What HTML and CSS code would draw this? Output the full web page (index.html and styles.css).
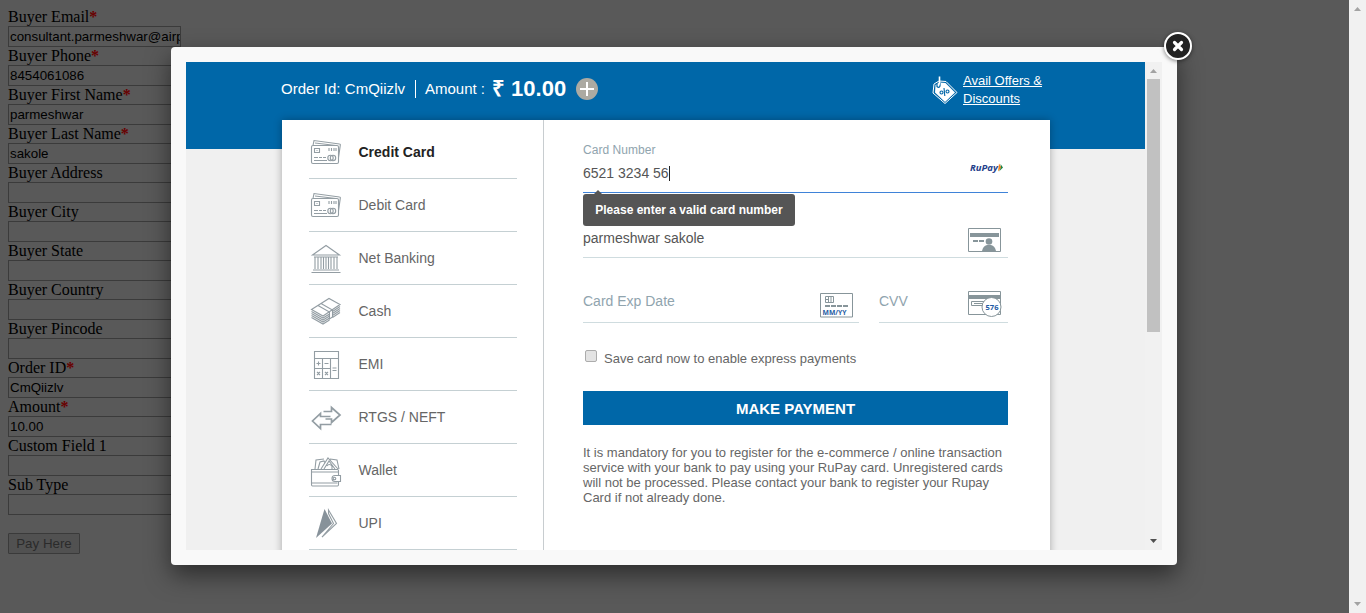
FILE: index.html
```html
<!DOCTYPE html>
<html lang="en">
<head>
<meta charset="utf-8">
<title>Payment</title>
<link rel="stylesheet" href="styles.css">
</head>
<body>
<div class="viewport">
  <form class="buyer">
    <label>Buyer Email<b>*</b></label><div class="field">consultant.parmeshwar@airp</div>
    <label>Buyer Phone<b>*</b></label><div class="field">8454061086</div>
    <label>Buyer First Name<b>*</b></label><div class="field">parmeshwar</div>
    <label>Buyer Last Name<b>*</b></label><div class="field">sakole</div>
    <label>Buyer Address</label><div class="field"></div>
    <label>Buyer City</label><div class="field"></div>
    <label>Buyer State</label><div class="field"></div>
    <label>Buyer Country</label><div class="field"></div>
    <label>Buyer Pincode</label><div class="field"></div>
    <label>Order ID<b>*</b></label><div class="field">CmQiizlv</div>
    <label>Amount<b>*</b></label><div class="field">10.00</div>
    <label>Custom Field 1</label><div class="field"></div>
    <label>Sub Type</label><div class="field"></div>
    <button type="button" class="pay-here">Pay Here</button>
  </form>
  <div class="page-scroll">
    <svg width="17" height="17"><path d="M5 11h7L8.500 7z" fill="#a3a3a3"/></svg>
    <svg width="17" height="17"><path d="M5 6h7L8.500 10z" fill="#a3a3a3"/></svg>
  </div>
</div>

<div class="modal">
  <div class="frame">
    <div class="content">
      <header class="top">
        <div class="order">
          <span class="order-id">Order Id: CmQiizlv</span>
          <span class="amount-label">Amount :</span>
          <strong class="amount">₹ 10.00</strong>
          <svg class="plus" width="22" height="22"><circle cx="11" cy="11" r="11" fill="#acaaa2"/><path d="M11 4v14M4 11h14" stroke="#fff" stroke-width="2"/></svg>
        </div>
        <a class="offers">
          <svg width="26" height="28" viewBox="0 0 26 28" fill="none">
            <path d="M2 8l5-3 7 .500 11 11-12 11L1 17z" stroke="#fff" stroke-width="1"/>
            <path d="M3.500 9l4-2.500 6 .5 9.500 9.500-10 9.500L3 16.500z" fill="#fff"/>
            <path d="M5 8v2.500q2 2 3-.5V7" stroke="#0067a8" stroke-width="1.200"/>
            <path d="M6.500 9q1-.5 1-3V.500" stroke="#fff" stroke-width="1.600"/>
            <g stroke="#0067a8" stroke-width="1.100"><circle cx="9.500" cy="16.500" r="1.500"/><circle cx="15.500" cy="15.500" r="1.500"/><path d="M12 12l.800 8"/></g>
          </svg>
          <span>Avail Offers &amp;<br>Discounts</span>
        </a>
      </header>
      <main class="card">
        <nav class="methods">
          <div class="method active"><svg class="icon" viewBox="0 0 32 32"><use href="#cards"/></svg>Credit Card</div>
          <div class="method"><svg class="icon" viewBox="0 0 32 32"><use href="#cards"/></svg>Debit Card</div>
          <div class="method"><svg class="icon low" viewBox="0 0 32 32"><path d="M2.500 12L16 2.500 29.500 12zM4 14h24M5 14v12M8 14v12M11 14v12M13.500 14v12M16 14v12M18.500 14v12M21 14v12M24 14v12M27 14v12M3 27h26M1.500 29.500h29"/></svg>Net Banking</div>
          <div class="method"><svg class="icon low" viewBox="0 0 32 32"><path d="M1.500 13.500L19 2.500l11 6L13 20zM8 9.500l11.500 6.500v7l3-2v-7L11 7.500M1.500 15.500L13 22l6.500-4M1.500 17.500L13 24l6.500-4M1.500 19.500L13 26l6.500-4M1.500 21.500L13 28l6.500-4M30 10.500l-7.500 5M30 12.500l-7.500 5M30 14.500l-7.500 5M30 16.500l-7.500 5"/></svg>Cash</div>
          <div class="method"><svg class="icon low" viewBox="0 0 32 32"><path d="M4.500 2.500h24v27h-24zM4.500 9.500h24M12.500 9.500v20M20.500 9.500v20M4.500 19.500h16M6.500 14.500h4M8.500 12.500v4M14.500 14.500h4M22.500 19h4M22.500 21.500h4M7 23l3 3M10 23l-3 3M15 23l3 3M18 23l-3 3"/></svg>EMI</div>
          <div class="method"><svg class="icon lower" viewBox="0 0 32 32"><path stroke-width="1.700" d="M13.500 8.500h8V4.500l8.500 7.500-8.500 7.500V16h-6M20.500 13.500h-10v-3L2.500 18l8 7.500v-4h11"/></svg>RTGS / NEFT</div>
          <div class="method"><svg class="icon lower" viewBox="0 0 32 32"><path d="M5 13L6 4l8-1M8 13l2-7 4-1 1 2M11 13l7-11 10 11M14 13l5-8 6 8M17 10q2-3 5 0v3M20 3l7 1 2 9M1.500 13.500h26q1 0 1 1v14q0 1.500-1 1.500h-25q-1 0-1-1.500zM2 16h26M1.500 27h26"/><path fill="#fff" d="M30.500 19.500v6H25q-3 0-3-3t3-3z"/><circle cx="24.500" cy="22.500" r="1.300"/></svg>Wallet</div>
          <div class="method"><svg class="icon low" viewBox="0 0 32 32"><path d="M14.500 1L22 15.500 6 30z" fill="#87929a" stroke="none"/><path d="M18.500 2l8 13.500L12 29l11.500-13.500-5-10z"/></svg>UPI</div>
        </nav>
        <section class="details">
          <div class="number-row">
            <div class="small-label">Card Number</div>
            <div class="value">6521 3234 56<i class="caret"></i></div>
            <svg class="rupay" width="36" height="14"><text x="0" y="10" textLength="28" lengthAdjust="spacingAndGlyphs">RuPay</text><path d="M29 2.500l2.500 4-3.500 4z" fill="#f58220"/><path d="M30.500 3l2.500 3.500-4 4 2-4z" fill="#168447"/></svg>
            <div class="tip">Please enter a valid card number</div>
          </div>
          <div class="name-row"><span>parmeshwar sakole</span>
            <svg width="33" height="24"><path d="M.5.5h32v23H.5z" fill="none" stroke="#87959a"/><path d="M2 5h29v4H2zM5 12h5v2H5zM11 12h5v2h-5z" fill="#87959a"/><circle cx="21" cy="13.500" r="3.300" fill="#87959a"/><path d="M14 23q1-5 5-6h4q4 1 5 6z" fill="#87959a"/></svg>
          </div>
          <div class="expiry-row">
            <div class="line exp"><span>Card Exp Date</span>
              <svg width="33" height="25"><path d="M.5.500h32v23.500H.5zM5.500 3.500h8v6h-8zM8.500 3.500v6M11 3.500v6M5.500 6.500h3" fill="none" stroke="#87959a"/><path d="M5 13h23" stroke="#87959a" stroke-width="2" stroke-dasharray="5 1"/><text class="mini" x="2.500" y="21.500" textLength="24" lengthAdjust="spacingAndGlyphs">MM/YY</text></svg>
            </div>
            <div class="line cvv"><span>CVV</span>
              <svg width="34" height="27"><path d="M.5.500h32v23H.5z" fill="none" stroke="#87959a"/><path d="M1 4h32v4H1z" fill="#87959a"/><path d="M3.500 10.500h14v4h-14zM6 12.500h9" fill="none" stroke="#87959a"/><circle cx="23.500" cy="16" r="9.500" fill="#fff" stroke="#87959a"/><text class="mini" x="17.500" y="18.500" textLength="13" lengthAdjust="spacingAndGlyphs">576</text></svg>
            </div>
          </div>
          <div class="save"><i class="check"></i><span>Save card now to enable express payments</span></div>
          <button type="button" class="pay">MAKE PAYMENT</button>
          <p class="note">It is mandatory for you to register for the e-commerce / online transaction<br>service with your bank to pay using your RuPay card. Unregistered cards<br>will not be processed. Please contact your bank to register your Rupay<br>Card if not already done.</p>
        </section>
      </main>
    </div>
    <div class="scroll">
      <svg width="17" height="17"><path d="M5 11h7L8.500 7z" fill="#a3a3a3"/></svg>
      <div class="thumb"></div>
      <svg width="17" height="17"><path d="M5 6h7L8.500 10z" fill="#505050"/></svg>
    </div>
  </div>
  <svg class="close" width="34" height="34"><circle cx="17" cy="17" r="13" fill="#222" stroke="#fff" stroke-width="2"/><path d="M13.500 13.500l7 7M20.500 13.500l-7 7" stroke="#fff" stroke-width="3.200" stroke-linecap="round"/></svg>
</div>

<svg class="defs" width="0" height="0"><defs>
  <g id="cards"><path d="M1.500 11q0-1.500 1.500-1.500h24q1.500 0 1.500 1.500v15q0 1.500-1.500 1.500H3q-1.500 0-1.500-1.500zM3 9.500l1-5 25.500 3.500q1 0 .8 1.200L28.500 22M5 7l21 2.500M4.500 12.500h5v4h-5zM6.500 14.500h1M19 12v3M21.500 12v3M24 12v3M26 12v3M4 21.500h4M9 21.500h3M13 21.500h3M4 24.500h13"/><circle cx="20.500" cy="22" r="2.700"/><circle cx="23" cy="22" r="2.700"/></g>
</defs></svg>
</body>
</html>
```
FILE: styles.css
```css
body { margin: 0; overflow: hidden; background: #595959; }
.viewport { display: flex; justify-content: space-between; height: 613px; }
.buyer { padding: 8px; font: 16px/18px "Liberation Serif", serif; color: #000; }
.buyer label { display: block; height: 18px; }
.buyer b { font-weight: 700; color: #690000; }
.field { box-sizing: border-box; width: 173px; height: 21px; padding: 0 1px; border: 1px solid #3b3b3b; overflow: hidden; white-space: nowrap; font: 13.330px/19px "Liberation Sans", sans-serif; }
.pay-here { display: block; box-sizing: border-box; width: 72px; height: 21px; margin-top: 18px; padding: 0; border: 1px solid #3a3a3a; border-radius: 1px; background: #515151; color: #2b2b2b; font: 13.330px/18px "Liberation Sans", sans-serif; }
.page-scroll, .scroll { display: flex; flex-direction: column; width: 17px; background: #f1f1f1; }
.page-scroll { justify-content: space-between; }
.modal { position: absolute; left: 171px; top: 47px; box-sizing: border-box; width: 1006px; height: 518px; padding: 15px; border-radius: 4px; background: #f9f9f9; box-shadow: 0 10px 25px rgba(0,0,0,.5); font-family: "Liberation Sans", sans-serif; }
.frame { display: flex; width: 976px; height: 488px; overflow: hidden; }
.content { width: 959px; height: 488px; overflow: hidden; background: #f0f0f0; }
.top { display: flex; justify-content: space-between; box-sizing: border-box; height: 87px; padding: 0 103px 0 95px; background: #0067a8; color: #fff; }
.order { display: flex; align-items: center; height: 54px; font-size: 15px; white-space: nowrap; }
.order-id { box-sizing: border-box; width: 135px; border-right: 1px solid #fff; line-height: 18px; letter-spacing: .04px; }
.amount-label { box-sizing: border-box; width: 69px; padding-left: 9px; line-height: 18px; }
.amount { width: 74px; margin: -4px 0 0 7px; font-size: 22px; }
.plus { margin-left: 10px; }
.offers { display: flex; gap: 5px; padding-top: 10px; font-size: 13px; line-height: 18px; text-decoration: underline; }
.offers svg { margin-top: 4px; }
.card { display: flex; position: relative; box-sizing: border-box; width: 768px; height: 460px; margin: -29px 0 0 96px; background: #fff; box-shadow: 0 0 8px rgba(0,0,0,.3); }
.methods { box-sizing: border-box; width: 262px; padding: 6px 26px 0 27px; border-right: 1px solid #c8cdd0; }
.method { display: flex; align-items: center; box-sizing: border-box; height: 53px; padding-left: 1px; border-bottom: 1px solid #c5d0d3; color: #666; font-size: 14px; }
.active { color: #222; font-weight: 700; }
.icon { width: 32px; height: 32px; margin-right: 16.500px; fill: none; stroke: #939da3; stroke-width: 1.100; }
.low { margin-top: 2px; }
.lower { margin-top: 4px; }
.details { width: 425px; padding: 0 0 0 39px; color: #555; }
.number-row { display: flow-root; position: relative; box-sizing: border-box; height: 73px; border-bottom: 1px solid #3f83d8; }
.small-label { margin-top: 22px; color: #90a4ae; font-size: 12px; line-height: 16px; letter-spacing: .05px; }
.value { display: flex; align-items: center; margin-top: 7px; font-size: 14px; line-height: 16px; }
.caret { width: 1px; height: 15px; background: #222; }
.rupay { position: absolute; right: 2px; top: 41px; }
.rupay text { fill: #24418b; font: italic 700 9.500px "Open Sans", sans-serif; }
.tip { position: absolute; left: 0; top: 74px; width: 212px; height: 32px; border-radius: 3px; background: #555; color: #fff; font: 700 12px/32px "Liberation Sans", sans-serif; text-align: center; }
.tip::before { content: ""; position: absolute; left: 11px; top: -4px; border: solid transparent; border-width: 0 4px 4px; border-bottom-color: #555; }
.name-row, .line { display: flex; justify-content: space-between; box-sizing: border-box; height: 65px; border-bottom: 1px solid #cfdcdf; font-size: 14px; line-height: 16px; }
.name-row span { margin-top: 37px; }
.name-row svg { margin: 35px 7px 0 0; }
.expiry-row { display: flex; gap: 20px; color: #90a4ae; }
.line span { margin-top: 35px; }
.line svg { margin: 35px 6px 0 0; }
.exp { width: 276px; }
.cvv { width: 129px; }
.cvv svg { margin-top: 33px; }
.mini { fill: #1d5ba3; font: 700 7.500px "Open Sans", sans-serif; }
.save { display: flex; margin-top: 27px; height: 18px; font-size: 13px; line-height: 18px; color: #666; }
.check { box-sizing: border-box; width: 12px; height: 12px; margin: 0 7px 0 2px; border: 1px solid #acacac; border-radius: 2px; background: #e3e3e3; }
.pay { display: block; width: 425px; height: 34px; margin-top: 23px; padding: 0; border: 0; background: #0067a8; color: #fff; font: 700 15px "Liberation Sans", sans-serif; }
.note { margin: 20px 0 0; color: #666; font-size: 13px; line-height: 15px; white-space: nowrap; }
.thumb { width: 13px; height: 253px; margin: 0 2px auto; background: #c1c1c1; }
.close { position: absolute; left: 990px; top: -18px; filter: drop-shadow(0 1px 2px rgba(0,0,0,.5)); }
.defs { position: absolute; }
```
